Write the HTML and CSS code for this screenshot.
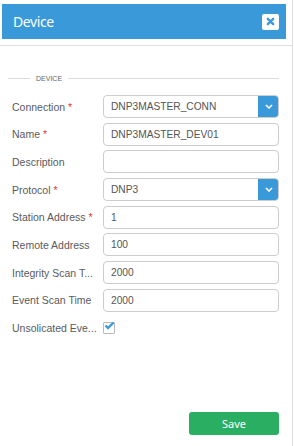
FILE: index.html
```html
<!DOCTYPE html>
<html lang="en">
<head>
    <meta charset="UTF-8">
    <title>Device</title>
    <link rel="stylesheet" href="styles.css">
</head>
<body>
<div class="dialog">
    <div class="dialog-top">
        <div class="dialog-header">
            <span class="dialog-title">Device</span>
            <span class="close-btn">
                <svg width="9" height="9" viewBox="0 0 10 10"><path d="M2 2 L8 8 M8 2 L2 8" stroke="#3a9ad9" stroke-width="2.6" stroke-linecap="round"/></svg>
            </span>
        </div>
    </div>

    <div class="dialog-body">
        <div class="legend">
            <span class="legend-line short"></span>
            <span class="legend-text">DEVICE</span>
            <span class="legend-line"></span>
        </div>

        <div class="row">
            <label>Connection <span class="req">*</span></label>
            <div class="select">
                <span class="select-value">DNP3MASTER_CONN</span>
                <span class="select-btn"><svg width="8" height="5" viewBox="0 0 8 5"><path d="M1 1 L4 4 L7 1" stroke="#fff" stroke-width="1.6" fill="none"/></svg></span>
            </div>
        </div>
        <div class="row">
            <label>Name <span class="req">*</span></label>
            <input type="text" value="DNP3MASTER_DEV01">
        </div>
        <div class="row">
            <label>Description</label>
            <input type="text" value="">
        </div>
        <div class="row">
            <label>Protocol <span class="req">*</span></label>
            <div class="select">
                <span class="select-value">DNP3</span>
                <span class="select-btn"><svg width="8" height="5" viewBox="0 0 8 5"><path d="M1 1 L4 4 L7 1" stroke="#fff" stroke-width="1.6" fill="none"/></svg></span>
            </div>
        </div>
        <div class="row">
            <label>Station Address <span class="req">*</span></label>
            <input type="text" value="1">
        </div>
        <div class="row">
            <label>Remote Address</label>
            <input type="text" value="100">
        </div>
        <div class="row">
            <label title="Integrity Scan Time">Integrity Scan T...</label>
            <input type="text" value="2000">
        </div>
        <div class="row">
            <label>Event Scan Time</label>
            <input type="text" value="2000">
        </div>
        <div class="row check-row">
            <label title="Unsolicated Events">Unsolicated Eve...</label>
            <span class="checkbox">
                <svg width="11" height="9" viewBox="0 0 11 9"><path d="M1.5 4.5 L4 7 L9.5 1.5" stroke="#3a9ad9" stroke-width="2.4" fill="none"/></svg>
            </span>
        </div>

        <div class="actions">
            <button class="save-btn">Save</button>
        </div>
    </div>
</div>
</body>
</html>
```

FILE: styles.css
```css
body {
    margin: 0;
    padding: 0;
    background-color: #fff;
    font-family: "Liberation Sans", Arial, sans-serif;
}
.dialog {
    width: 293px;
    height: 446px;
    box-sizing: border-box;
    border-right: 1px solid #dedede;
}
.dialog-top {
    height: 46px;
    padding: 4px 0 0 2px;
    box-sizing: border-box;
    border-bottom: 1px solid #dedede;
}
.dialog-header {
    width: 284px;
    height: 35px;
    background-color: #3a9ad9;
    display: flex;
    align-items: center;
    justify-content: space-between;
    padding: 0 7px 0 11px;
    box-sizing: border-box;
}
.dialog-title {
    color: #fff;
    font-size: 14px;
    letter-spacing: -0.4px;
    font-family: "Noto Sans", sans-serif;
}
.close-btn {
    width: 17px;
    height: 16px;
    background-color: #fff;
    border-radius: 2px;
    display: flex;
    align-items: center;
    justify-content: center;
}
.dialog-body {
    padding: 27px 13px 0 8px;
}
.legend {
    display: flex;
    align-items: center;
    height: 10px;
    margin-bottom: 12px;
}
.legend-line {
    flex: 1;
    height: 1px;
    background-color: #ddd;
}
.legend-line.short {
    flex: 0 0 22px;
}
.legend-text {
    font-size: 7px;
    color: #666;
    padding: 0 6px;
}
.row {
    display: flex;
    align-items: center;
    height: 23px;
    margin-bottom: 4.7px;
    padding-left: 4px;
}
.row label {
    width: 91px;
    flex: 0 0 91px;
    font-size: 10.5px;
    color: #5a5a5a;
    white-space: nowrap;
    padding-right: 4px;
    box-sizing: border-box;
}
.req {
    color: #e53935;
}
.row input[type="text"], .select {
    flex: 1;
    height: 23px;
    box-sizing: border-box;
    border: 1px solid #ccc;
    border-radius: 4px;
    font-family: "Liberation Sans", Arial, sans-serif;
    font-size: 10.2px;
    color: #555;
    padding: 0 7px;
    margin: 0;
    min-width: 0;
}
.select {
    display: flex;
    align-items: center;
    justify-content: space-between;
    padding-right: 0;
    overflow: hidden;
}
.select-btn {
    width: 21px;
    height: 23px;
    margin-right: -1px;
    background-color: #3a9ad9;
    display: flex;
    align-items: center;
    justify-content: center;
}
.checkbox {
    width: 10px;
    height: 10px;
    border: 1px solid #bbb;
    border-radius: 1px;
    position: relative;
}
.checkbox svg {
    position: absolute;
    left: 0;
    top: -2px;
}
.actions {
    display: flex;
    justify-content: flex-end;
    margin-top: 72px;
}
.save-btn {
    width: 90px;
    height: 23px;
    background-color: #2aae62;
    color: #fff;
    border: none;
    border-radius: 3px;
    font-family: "Noto Sans", sans-serif;
    font-size: 11px;
    cursor: pointer;
}
```
